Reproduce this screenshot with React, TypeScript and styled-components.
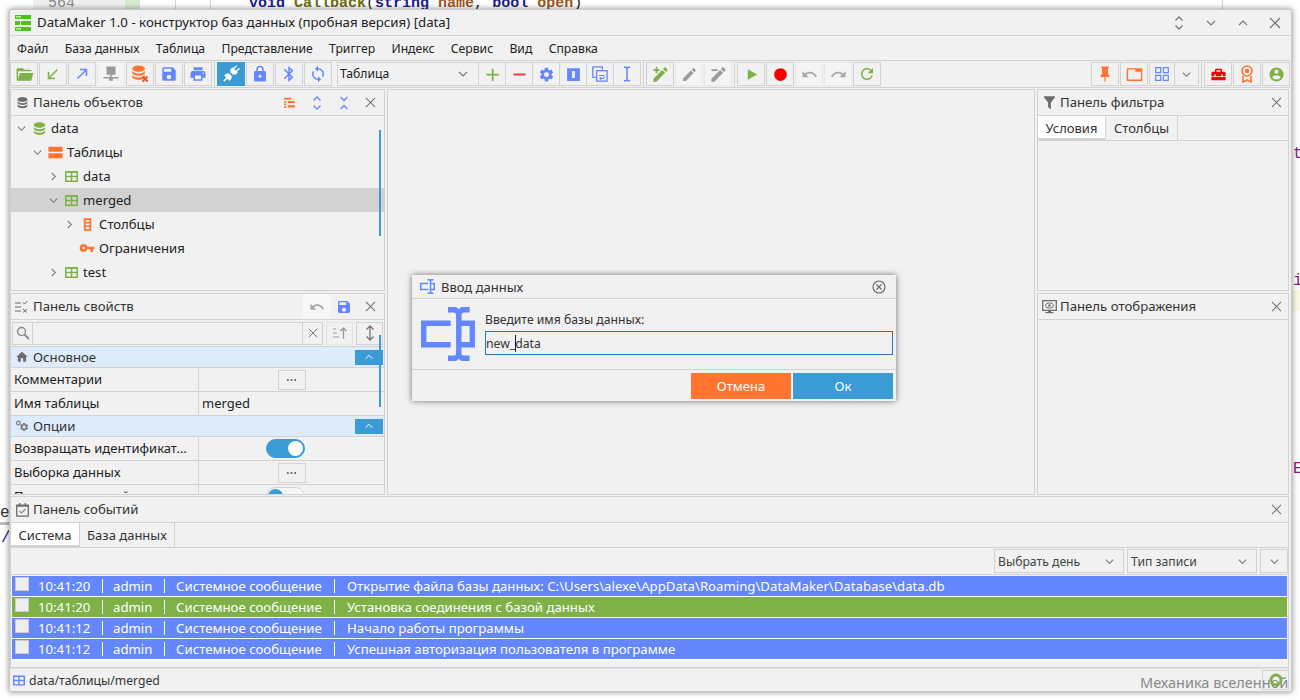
import React, { FC, ReactNode } from 'react';
import styled, { createGlobalStyle } from 'styled-components';
import { MdSettings } from 'react-icons/md';

const BLUE = '#6486ff';
const ORANGE = '#ff7530';
const GREEN = '#7eb246';
const ACCENT = '#3a9bd5';

const PATHS: Record<string, string> = {
  folder: 'M19,20H4C2.89,20 2,19.1 2,18V6C2,4.89 2.89,4 4,4H10L12,6H19A2,2 0 0,1 21,8H21L4,8V18L6.14,10H23.21L20.93,18.5C20.7,19.37 19.92,20 19,20Z',
  save: 'M15,9H5V5H15M12,19A3,3 0 0,1 9,16A3,3 0 0,1 12,13A3,3 0 0,1 15,16A3,3 0 0,1 12,19M17,3H5C3.89,3 3,3.9 3,5V19A2,2 0 0,0 5,21H19A2,2 0 0,0 21,19V7L17,3Z',
  printer: 'M18,3H6V7H18M19,12A1,1 0 0,1 18,11A1,1 0 0,1 19,10A1,1 0 0,1 20,11A1,1 0 0,1 19,12M16,19H8V14H16M19,8H5A3,3 0 0,0 2,11V17H6V21H18V17H22V11A3,3 0 0,0 19,8Z',
  lock: 'M12,17A2,2 0 0,0 14,15C14,13.89 13.1,13 12,13A2,2 0 0,0 10,15A2,2 0 0,0 12,17M18,8A2,2 0 0,1 20,10V20A2,2 0 0,1 18,22H6A2,2 0 0,1 4,20V10C4,8.89 4.9,8 6,8H7V6A5,5 0 0,1 12,1A5,5 0 0,1 17,6V8H18M12,3A3,3 0 0,0 9,6V8H15V6A3,3 0 0,0 12,3Z',
  bluetooth: 'M14.88,16.29L13,18.17V14.41M13,5.83L14.88,7.71L13,9.58M17.71,7.71L12,2H11V9.58L6.41,5L5,6.41L10.59,12L5,17.58L6.41,19L11,14.41V22H12L17.71,16.29L13.41,12L17.71,7.71Z',
  sync: 'M12,18A6,6 0 0,1 6,12C6,11 6.25,10.03 6.7,9.2L5.24,7.74C4.46,8.97 4,10.43 4,12A8,8 0 0,0 12,20V23L16,19L12,15M12,4V1L8,5L12,9V6A6,6 0 0,1 18,12C18,13 17.75,13.97 17.3,14.8L18.76,16.26C19.54,15.03 20,13.57 20,12A8,8 0 0,0 12,4Z',
  database: 'M12,3C7.58,3 4,4.79 4,7C4,9.21 7.58,11 12,11C16.42,11 20,9.21 20,7C20,4.79 16.42,3 12,3M4,9V12C4,14.21 7.58,16 12,16C16.42,16 20,14.21 20,12V9C20,11.21 16.42,13 12,13C7.58,13 4,11.21 4,9M4,14V17C4,19.21 7.58,21 12,21C16.42,21 20,19.21 20,17V14C20,16.21 16.42,18 12,18C7.58,18 4,16.21 4,14Z',
  home: 'M10,20V14H14V20H19V12H22L12,3L2,12H5V20H10Z',
  pin: 'M16,12V4H17V2H7V4H8V12L6,14V16H11.2V22H12.8V16H18V14L16,12Z',
  account: 'M12,19.2C9.5,19.2 7.29,17.92 6,16C6.03,14 10,12.9 12,12.9C14,12.9 17.97,14 18,16C16.71,17.92 14.5,19.2 12,19.2M12,5A3,3 0 0,1 15,8A3,3 0 0,1 12,11A3,3 0 0,1 9,8A3,3 0 0,1 12,5M12,2A10,10 0 0,0 2,12A10,10 0 0,0 12,22A10,10 0 0,0 22,12C22,6.47 17.5,2 12,2Z',
  key: 'M7,14A2,2 0 0,1 5,12A2,2 0 0,1 7,10A2,2 0 0,1 9,12A2,2 0 0,1 7,14M12.65,10C11.83,7.67 9.61,6 7,6A6,6 0 0,0 1,12A6,6 0 0,0 7,18C9.61,18 11.83,16.33 12.65,14H17V18H21V14H23V10H12.65Z',
  filter: 'M14,12V19.88C14.04,20.18 13.94,20.5 13.71,20.71C13.32,21.1 12.69,21.1 12.3,20.71L10.29,18.7C10.06,18.47 9.96,18.16 10,17.87V12H9.97L4.21,4.62C3.87,4.19 3.95,3.56 4.38,3.22C4.57,3.08 4.78,3 5,3V3H19V3C19.22,3 19.43,3.08 19.62,3.22C20.05,3.56 20.13,4.19 19.79,4.62L14.03,12H14Z',
  undo: 'M12.5,8C9.85,8 7.45,9 5.6,10.6L2,7V16H11L7.38,12.38C8.77,11.22 10.54,10.5 12.5,10.5C16.04,10.5 19.05,12.81 20.1,16L22.47,15.22C21.08,11.03 17.15,8 12.5,8Z',
  redo: 'M18.4,10.6C16.55,9 14.15,8 11.5,8C6.85,8 2.92,11.03 1.53,15.22L3.9,16C4.95,12.81 7.96,10.5 11.5,10.5C13.45,10.5 15.23,11.22 16.62,12.38L13,16H22V7L18.4,10.6Z',
  refresh: 'M17.65 6.35C16.2 4.9 14.21 4 12 4c-4.42 0-7.99 3.58-7.99 8s3.57 8 7.99 8c3.73 0 6.84-2.55 7.73-6h-2.08c-.82 2.33-3.04 4-5.65 4-3.31 0-6-2.69-6-6s2.69-6 6-6c1.66 0 3.14.69 4.22 1.78L13 11h7V4l-2.35 2.35z',
  pencil: 'M20.71,7.04C21.1,6.65 21.1,6 20.71,5.63L18.37,3.29C18,2.9 17.35,2.9 16.96,3.29L15.12,5.12L18.87,8.87M3,17.25V21H6.75L17.81,9.93L14.06,6.18L3,17.25Z',
  toolbox: 'M18 16H16V15H8V16H6V15H2V20H22V15H18V16M20 8H17V6C17 4.9 16.1 4 15 4H9C7.9 4 7 4.9 7 6V8H4C2.9 8 2 8.9 2 10V14H6V12H8V14H16V12H18V14H22V10C22 8.9 21.1 8 20 8M15 8H9V6H15V8Z',
  ibeam: 'M13,19A1,1 0 0,0 14,20H16V22H13.5C12.95,22 12,21.55 12,21C12,21.55 11.05,22 10.5,22H8V20H10A1,1 0 0,0 11,19V5A1,1 0 0,0 10,4H8V2H10.5C11.05,2 12,2.45 12,3C12,2.45 12.95,2 13.5,2H16V4H14A1,1 0 0,0 13,5V19Z',
  textbox: 'M17,7H22V17H17V19A1,1 0 0,0 18,20H20V22H17.5C16.95,22 16,21.55 16,21C16,21.55 15.05,22 14.5,22H12V20H14A1,1 0 0,0 15,19V5A1,1 0 0,0 14,4H12V2H14.5C15.05,2 16,2.45 16,3C16,2.45 16.95,2 17.5,2H20V4H18A1,1 0 0,0 17,5V7M2,7H13V9H4V15H13V17H2V7M20,15V9H17V15H20Z',
  server: 'M6 2h12v11h-5v3h9v2H14.5v3h-5v-3H2v-2h9v-3H6z',
  infobox: 'M3 3h18v18H3z M10 7v10h4V7z',
  plus: 'M11 4h2.5v7H21v2.5h-7.5V21H11v-7.5H3.5V11H11z',
  minus: 'M3.5 10.5h17v3h-17z',
  tables: 'M2 4h20v7H2z M2 13h20v7H2z',
  cols: 'M6 2h12v20H6z M9 5v3h6V5z M9 10.5v3h6v-3z M9 16v3h6v-3z',
  play: 'M6 3.5L21 12 6 20.5z',
  circle: 'M12 3a9 9 0 1 0 0 18 9 9 0 0 0 0-18z',
  toolwin: 'M1 3h22v18H1z M3 8v11h18V8z M3 5v3h10V5z',
  tree: 'M2 3h13v4H2z M2 9h4v3H2z M2 14h4v3H2z M2 19h4v3H2z M9 9h13v4H9z M9 17h13v4H9z',
};

const Glyph: FC<{ name: string; size?: number; color: string }> = ({ name, size = 16, color }) => (
  <IconSvg viewBox='0 0 24 24' width={size} height={size} $color={color}>
    <path fillRule='evenodd' d={PATHS[name]} />
  </IconSvg>
);

const Chevron: FC<{ dir?: 'up' | 'down' | 'right'; size?: number; color?: string }> = ({ dir = 'down', size = 12, color = '#777' }) => {
  const pts = dir === 'down' ? '4,8 12,16 20,8' : dir === 'up' ? '4,16 12,8 20,16' : '8,4 16,12 8,20';
  return (
    <svg viewBox='0 0 24 24' width={size} height={size}>
      <polyline points={pts} fill='none' stroke={color} strokeWidth='2.4' />
    </svg>
  );
};

const Cross: FC<{ size?: number; color?: string }> = ({ size = 11, color = '#6f6f6f' }) => (
  <svg viewBox='0 0 12 12' width={size} height={size}>
    <path d='M1 1l10 10M11 1L1 11' stroke={color} strokeWidth='1.1' fill='none' />
  </svg>
);

const DoubleChevron: FC<{ inward?: boolean; color: string; size?: number }> = ({ inward, color, size = 14 }) => (
  <svg viewBox='0 0 14 14' width={size} height={size}>
    <polyline points={inward ? '3.5,1 7,4.5 10.5,1' : '3.5,4.5 7,1 10.5,4.5'} fill='none' stroke={color} strokeWidth='1.3' />
    <polyline points={inward ? '3.5,13 7,9.5 10.5,13' : '3.5,9.5 7,13 10.5,9.5'} fill='none' stroke={color} strokeWidth='1.3' />
  </svg>
);

const TableIcon: FC<{ color?: string; w?: number; h?: number }> = ({ color = GREEN, w = 13, h = 11 }) => (
  <svg viewBox='0 0 13 11' width={w} height={h}>
    <path d='M.75.75h11.5v9.5H.75zM6.5.75v9.5M.75 5.5h11.5' fill='none' stroke={color} strokeWidth='1.5' />
    <path d='M.75.75h11.5v1H.75z' fill={color} />
  </svg>
);

const Logo = () => (
  <svg viewBox='0 0 16 16' width={16} height={16}>
    <path d='M0 0h16v4H0z' fill='#4cc31a' />
    <path d='M0 6h5v4H0z' fill='#4cc31a' />
    <path d='M6 6h10v4H6z' fill='#4cc31a' />
    <path d='M0 12h16v4H0z' fill='#4cc31a' />
    <path d='M1 1.2h5v1.4H1zM1 13.2h5v1.4H1z' fill='#d8f5c8' />
  </svg>
);

const ArrowBL: FC<{ flip?: boolean; color: string }> = ({ flip, color }) => (
  <FlipSvg viewBox='0 0 16 16' width={16} height={16} $flip={flip}>
    <path d='M12.5 3.5L4 12M3.5 6V12.500H10' fill='none' stroke={color} strokeWidth='1.5' />
  </FlipSvg>
);

const DbRemove = () => (
  <svg viewBox='0 0 20 20' width={20} height={20}>
    <path transform='translate(-1 -1) scale(.8)' d={PATHS.database} fill={ORANGE} />
    <path d='M12.5 12.5l5 5M17.5 12.5l-5 5' stroke='#e8541c' strokeWidth='1.8' />
  </svg>
);

const Plug = () => (
  <svg viewBox='0 0 24 24' width={20} height={20}>
    <g transform='rotate(45 12 12)' fill='#fff'>
      <path d='M9 0h1.6v5H9zM13.4 0H15v5h-1.6zM7.5 5h9v3.5l-2.5 2.5h-4L7.5 8.5z' />
      <path d='M10 13h4l2.5 2.5V19h-3.5v5h-2v-5H7.500v-3.500z' />
    </g>
  </svg>
);

const CopySync = () => (
  <svg viewBox='0 0 16 16' width={16} height={16}>
    <path d='M.8.8h9.5v3M.8.8v10.500h3' fill='none' stroke={BLUE} strokeWidth='1.3' />
    <path d='M4.600 4.600h10.500v10.600H4.600z' fill='none' stroke={BLUE} strokeWidth='1.300' />
    <path d='M7 9.500h5v3H8M9.500 11l-2 1.500 2 1.500' fill='none' stroke={BLUE} strokeWidth='1' />
  </svg>
);

const PencilMark: FC<{ color: string; plus?: boolean }> = ({ color, plus }) => (
  <svg viewBox='0 0 24 24' width={19} height={19}>
    <path d={PATHS.pencil} fill={color} />
    <path d={plus ? 'M3 6.500h8M7 2.500v8' : 'M3 6.500h8'} stroke={color} strokeWidth='2.200' />
  </svg>
);

const GridIcon = () => (
  <svg viewBox='0 0 14 14' width={14} height={14}>
    <path d='M.7.7h5v5h-5zM8.300.7h5v5h-5zM.7 8.300h5v5h-5zM8.300 8.300h5v5h-5z' fill='none' stroke={BLUE} strokeWidth='1.200' />
  </svg>
);

const Ribbon = () => (
  <svg viewBox='0 0 16 18' width={16} height={18}>
    <circle cx='8' cy='6' r='5' fill='none' stroke={ORANGE} strokeWidth='1.600' />
    <circle cx='8' cy='6' r='2.200' fill={ORANGE} />
    <path d='M4 11v6l4-2 4 2v-6' fill='none' stroke={ORANGE} strokeWidth='1.600' />
  </svg>
);

const PropsIcon = () => (
  <svg viewBox='0 0 14 12' width={14} height={12}>
    <path d='M0 2h6M0 6h6M0 10h6M8 1.500l1.500 1.500 3-3M8 8l4 3.500M12 8l-4 3.500' fill='none' stroke='#666' strokeWidth='1' />
  </svg>
);

const MonitorEye = () => (
  <svg viewBox='0 0 15 14' width={15} height={14}>
    <path d='M.7.7h13.600v9.600H.7z' fill='none' stroke='#6d6d6d' strokeWidth='1.300' />
    <path d='M6 10.500h3v1.500h2.500v1.300h-8V12H6z' fill='#6d6d6d' />
    <ellipse cx='7.500' cy='5.500' rx='4' ry='2.600' fill='none' stroke='#6d6d6d' />
    <circle cx='7.500' cy='5.500' r='1.300' fill='#6d6d6d' />
  </svg>
);

const CalendarCheck = () => (
  <svg viewBox='0 0 13 14' width={13} height={14}>
    <path d='M.7 2.200h11.600v11H.7z' fill='none' stroke='#6d6d6d' strokeWidth='1.300' />
    <path d='M.7 2h11.600v1.800H.7zM3 0h1.400v2H3zM8.600 0H10v2H8.600z' fill='#6d6d6d' />
    <path d='M3.500 8l2 2 4-4' fill='none' stroke='#8a8a8a' strokeWidth='1.200' />
  </svg>
);

const Dots = () => (
  <svg viewBox='0 0 12 4' width={11} height={4}>
    <circle cx='2' cy='2' r='1.200' fill='#666' />
    <circle cx='6' cy='2' r='1.200' fill='#666' />
    <circle cx='10' cy='2' r='1.200' fill='#666' />
  </svg>
);

const SearchGlyph = () => (
  <svg viewBox='0 0 14 14' width={14} height={14}>
    <circle cx='5.500' cy='5.500' r='4' fill='none' stroke='#888' strokeWidth='1.300' />
    <path d='M8.500 8.500l4.500 4.500' stroke='#888' strokeWidth='1.800' />
  </svg>
);

const SortGlyph = () => (
  <svg viewBox='0 0 16 14' width={16} height={14}>
    <path d='M1 3h3M1 7h4M1 11h6' stroke='#999' strokeWidth='1.200' />
    <path d='M11.500 13V2M8.500 5l3-3 3 3' fill='none' stroke='#999' strokeWidth='1.300' />
  </svg>
);

const UpDownGlyph = () => (
  <svg viewBox='0 0 12 16' width={12} height={16}>
    <path d='M6 1v14M2.500 4.500L6 1l3.500 3.500M2.500 11.500L6 15l3.500-3.500' fill='none' stroke='#777' strokeWidth='1.300' />
  </svg>
);

const GearsGlyph = () => (
  <GearsBox>
    <MdSettings size={8} color='#8a8a8a' />
    <MdSettings size={12} color='#7a7a7a' />
  </GearsBox>
);

const CloseCircle = () => (
  <svg viewBox='0 0 14 14' width={14} height={14}>
    <circle cx='7' cy='7' r='6' fill='none' stroke='#666' strokeWidth='1.100' />
    <path d='M4.500 4.500l5 5M9.500 4.500l-5 5' stroke='#666' strokeWidth='1.100' />
  </svg>
);

const ToolButtons: FC<{ items: [ReactNode, boolean?, boolean?][] }> = ({ items }) => (
  <>
    {items.map(([icon, muted, active], i) => (
      <ToolBtn key={i} $muted={muted} $active={active}>
        {icon}
      </ToolBtn>
    ))}
  </>
);

const MENU = ['Файл', 'База данных', 'Таблица', 'Представление', 'Триггер', 'Индекс', 'Сервис', 'Вид', 'Справка'];

const TREE: { depth: number; arrow?: 'down' | 'right'; icon: ReactNode; label: string; selected?: boolean }[] = [
  { depth: 0, arrow: 'down', icon: <Glyph name='database' size={17} color={GREEN} />, label: 'data' },
  { depth: 1, arrow: 'down', icon: <Glyph name='tables' size={17} color={ORANGE} />, label: 'Таблицы' },
  { depth: 2, arrow: 'right', icon: <TableIcon />, label: 'data' },
  { depth: 2, arrow: 'down', icon: <TableIcon />, label: 'merged', selected: true },
  { depth: 3, arrow: 'right', icon: <Glyph name='cols' size={15} color={ORANGE} />, label: 'Столбцы' },
  { depth: 3, icon: <Glyph name='key' size={16} color={ORANGE} />, label: 'Ограничения' },
  { depth: 2, arrow: 'right', icon: <TableIcon />, label: 'test' },
];

const EVENTS = [
  { time: '10:41:20', text: 'Открытие файла базы данных: C:\\Users\\alexe\\AppData\\Roaming\\DataMaker\\Database\\data.db', color: BLUE },
  { time: '10:41:20', text: 'Установка соединения с базой данных', color: GREEN },
  { time: '10:41:12', text: 'Начало работы программы', color: BLUE },
  { time: '10:41:12', text: 'Успешная авторизация пользователя в программе', color: BLUE },
];

const App: FC = () => (
  <Screen>
    <GlobalStyle />
    <Backdrop>
      <Gutter>564</Gutter>
      <GutterMark />
      <EdgeLine $x={175} />
      <EdgeLine $x={210} />
      <EdgeLine $x={1222} />
      <CodeLine>
        <CodeWord $color='#1c1c8c'>void</CodeWord> <CodeWord $color='#6c6c10'>Callback</CodeWord>(<CodeWord $color='#1c1c8c'>string</CodeWord> <CodeWord $color='#a0561c'>name</CodeWord>, <CodeWord $color='#1c1c8c'>bool</CodeWord> <CodeWord $color='#a0561c'>open</CodeWord>)
      </CodeLine>
      <EdgeChar $x={1293} $y={144} $color='#8a1a8a'>t</EdgeChar>
      <EdgeChar $x={1293} $y={271} $color='#8a1a8a'>i</EdgeChar>
      <EdgeChar $x={1293} $y={459} $color='#8a1a8a'>E</EdgeChar>
      <EdgeChar $x={0} $y={503} $color='#333'>e</EdgeChar>
      <EdgeChar $x={1} $y={528} $color='#1c1c8c'>/</EdgeChar>
      <EdgeStrip />
      <YellowStrip />
    </Backdrop>

    <Window>
      <TitleBar>
        <Logo />
        <TitleText>DataMaker 1.0 - конструктор баз данных (пробная версия) [data]</TitleText>
        <WinControls>
          <WinBtn><DoubleChevron color='#777' size={14} /></WinBtn>
          <WinBtn><Chevron size={12} /></WinBtn>
          <WinBtn><Chevron dir='up' size={12} /></WinBtn>
          <WinBtn><Cross size={12} /></WinBtn>
        </WinControls>
      </TitleBar>

      <MenuBar>
        {MENU.map((m) => (
          <MenuItem key={m}>{m}</MenuItem>
        ))}
      </MenuBar>

      <Toolbar>
        <ToolButtons
          items={[
            [<Glyph name='folder' size={19} color={GREEN} />],
            [<ArrowBL color={GREEN} />],
            [<ArrowBL color={BLUE} flip />],
            [<Glyph name='server' size={18} color='#999' />, true],
            [<DbRemove />],
            [<Glyph name='save' size={18} color={BLUE} />],
            [<Glyph name='printer' size={18} color={BLUE} />],
          ]}
        />
        <ToolSep />
        <ToolButtons
          items={[
            [<Plug />, false, true],
            [<Glyph name='lock' size={18} color={BLUE} />],
            [<Glyph name='bluetooth' size={18} color={BLUE} />],
            [<Glyph name='sync' size={18} color={BLUE} />],
          ]}
        />
        <ComboBox>
          <span>Таблица</span>
          <Chevron size={12} />
        </ComboBox>
        <JoinedBtn><Glyph name='plus' size={17} color={GREEN} /></JoinedBtn>
        <JoinedBtn><Glyph name='minus' size={17} color='#f0454f' /></JoinedBtn>
        <JoinedBtn><MdSettings size={17} color={BLUE} /></JoinedBtn>
        <JoinedBtn><Glyph name='infobox' size={17} color={BLUE} /></JoinedBtn>
        <JoinedBtn><CopySync /></JoinedBtn>
        <JoinedBtn><Glyph name='ibeam' size={18} color={BLUE} /></JoinedBtn>
        <ToolSep />
        <ToolButtons
          items={[
            [<PencilMark color={GREEN} plus />],
            [<Glyph name='pencil' size={17} color='#999' />, true],
            [<PencilMark color='#999' />, true],
          ]}
        />
        <ToolSep />
        <ToolButtons
          items={[
            [<Glyph name='play' size={15} color={GREEN} />],
            [<Glyph name='circle' size={17} color='#f50000' />],
            [<Glyph name='undo' size={17} color='#a8a8a8' />, true],
            [<Glyph name='redo' size={17} color='#a8a8a8' />, true],
            [<Glyph name='refresh' size={18} color={GREEN} />],
          ]}
        />
        <Spacer />
        <ToolButtons
          items={[
            [<Glyph name='pin' size={18} color={ORANGE} />],
            [<Glyph name='toolwin' size={17} color={ORANGE} />],
          ]}
        />
        <ToolGroupJoined>
          <GridBtn><GridIcon /></GridBtn>
          <ArrowBtn><Chevron size={11} /></ArrowBtn>
        </ToolGroupJoined>
        <ToolSep />
        <ToolButtons
          items={[
            [<Glyph name='toolbox' size={17} color='#f20000' />],
            [<Ribbon />],
            [<Glyph name='account' size={17} color={GREEN} />],
          ]}
        />
      </Toolbar>

      <Workspace>
        <LeftColumn>
          <ObjectsPanel>
            <PanelHeader>
              <HeaderIcon><Glyph name='database' size={15} color='#6d6d6d' /></HeaderIcon>
              <PanelTitle>Панель объектов</PanelTitle>
              <HeaderBtn><Glyph name='tree' size={13} color={ORANGE} /></HeaderBtn>
              <HeaderBtn><DoubleChevron color={BLUE} /></HeaderBtn>
              <HeaderBtn><DoubleChevron color={BLUE} inward /></HeaderBtn>
              <HeaderBtn><Cross /></HeaderBtn>
            </PanelHeader>
            <Tree>
              {TREE.map((row, i) => (
                <TreeRow key={i} $depth={row.depth} $selected={row.selected}>
                  <TreeArrow>{row.arrow && <Chevron dir={row.arrow} size={11} />}</TreeArrow>
                  <TreeIcon>{row.icon}</TreeIcon>
                  <span>{row.label}</span>
                </TreeRow>
              ))}
              <ScrollThumb $top={14} $height={106} />
            </Tree>
          </ObjectsPanel>

          <PropsPanel>
            <PanelHeader>
              <HeaderIcon><PropsIcon /></HeaderIcon>
              <PanelTitle>Панель свойств</PanelTitle>
              <UndoBtn><Glyph name='undo' size={16} color='#a8a8a8' /></UndoBtn>
              <HeaderBtn><Glyph name='save' size={16} color={BLUE} /></HeaderBtn>
              <HeaderBtn><Cross /></HeaderBtn>
            </PanelHeader>
            <SearchRow>
              <SearchBox>
                <SearchIconCell><SearchGlyph /></SearchIconCell>
                <SearchField />
                <SearchClear><Cross size={10} /></SearchClear>
              </SearchBox>
              <SearchBtn $muted><SortGlyph /></SearchBtn>
              <SearchBtn><UpDownGlyph /></SearchBtn>
            </SearchRow>
            <PropsBody>
              <SectionRow>
                <Glyph name='home' size={14} color='#6d6d6d' />
                <span>Основное</span>
                <CollapseBtn><Chevron dir='up' size={10} color='#fff' /></CollapseBtn>
              </SectionRow>
              <PropRow>
                <PropName>Комментарии</PropName>
                <PropValue $center><EllipsisBtn><Dots /></EllipsisBtn></PropValue>
              </PropRow>
              <PropRow>
                <PropName>Имя таблицы</PropName>
                <PropValue>merged</PropValue>
              </PropRow>
              <SectionRow>
                <GearsGlyph />
                <span>Опции</span>
                <CollapseBtn><Chevron dir='up' size={10} color='#fff' /></CollapseBtn>
              </SectionRow>
              <PropRow>
                <PropName>Возвращать идентификат...</PropName>
                <PropValue $center><Toggle $on /></PropValue>
              </PropRow>
              <PropRow>
                <PropName>Выборка данных</PropName>
                <PropValue $center><EllipsisBtn><Dots /></EllipsisBtn></PropValue>
              </PropRow>
              <PropRow>
                <PropName>Проверка записей</PropName>
                <PropValue $center><Toggle /></PropValue>
              </PropRow>
              <ScrollThumb $top={-12} $height={72} />
            </PropsBody>
          </PropsPanel>
        </LeftColumn>

        <CenterPane />

        <RightColumn>
          <ObjectsPanel>
            <PanelHeader>
              <HeaderIcon><Glyph name='filter' size={17} color='#6d6d6d' /></HeaderIcon>
              <PanelTitle>Панель фильтра</PanelTitle>
              <EdgeCloseBtn><Cross /></EdgeCloseBtn>
            </PanelHeader>
            <TabStrip>
              <Tab $active $width={68}>Условия</Tab>
              <Tab $width={72}>Столбцы</Tab>
            </TabStrip>
          </ObjectsPanel>
          <PropsPanel>
            <PanelHeader>
              <HeaderIcon><MonitorEye /></HeaderIcon>
              <PanelTitle>Панель отображения</PanelTitle>
              <EdgeCloseBtn><Cross /></EdgeCloseBtn>
            </PanelHeader>
          </PropsPanel>
        </RightColumn>
      </Workspace>

      <EventsPanel>
        <PanelHeader>
          <HeaderIcon><CalendarCheck /></HeaderIcon>
          <PanelTitle>Панель событий</PanelTitle>
          <EdgeCloseBtn><Cross /></EdgeCloseBtn>
        </PanelHeader>
        <TabStrip>
          <Tab $active $width={69}>Система</Tab>
          <Tab $width={95}>База данных</Tab>
        </TabStrip>
        <FilterRow>
          <FilterSelect $width={130}>
            <span>Выбрать день</span>
            <Chevron size={11} />
          </FilterSelect>
          <FilterSelect $width={130}>
            <span>Тип записи</span>
            <Chevron size={11} />
          </FilterSelect>
          <FilterSelect $width={28} $center>
            <Chevron size={11} />
          </FilterSelect>
        </FilterRow>
        <EventList>
          {EVENTS.map((e, i) => (
            <EventRow key={i} $color={e.color}>
              <EventCheck />
              <EventTime>{e.time}</EventTime>
              <EventBar />
              <EventUser>admin</EventUser>
              <EventBar />
              <EventKind>Системное сообщение</EventKind>
              <EventBar />
              <EventText>{e.text}</EventText>
            </EventRow>
          ))}
        </EventList>
      </EventsPanel>

      <StatusBar>
        <TableIcon color={BLUE} w={12} h={11} />
        <span>data/таблицы/merged</span>
      </StatusBar>
    </Window>

    <Dialog>
      <DialogTitle>
        <svg viewBox='2 2 20 20' width={15} height={15}>
          <path d={PATHS.textbox} fill={BLUE} />
        </svg>
        <DialogCaption>Ввод данных</DialogCaption>
        <CloseCircle />
      </DialogTitle>
      <DialogBody>
        <svg viewBox='2 2 20 20' width={54} height={54}>
          <path d={PATHS.textbox} fill={BLUE} />
        </svg>
        <DialogForm>
          <DialogLabel>Введите имя базы данных:</DialogLabel>
          <DialogInput>
            new_<Caret />data
          </DialogInput>
        </DialogForm>
      </DialogBody>
      <DialogFooter>
        <DialogBtn $color={ORANGE}>Отмена</DialogBtn>
        <DialogBtn $color={ACCENT}>Ок</DialogBtn>
      </DialogFooter>
    </Dialog>

    <Watermark>Механика вселенной</Watermark>
    <TrayBox>
      <svg viewBox='0 0 14 14' width={14} height={14}>
        <circle cx='7' cy='7' r='5' fill='none' stroke={GREEN} strokeWidth='3' />
      </svg>
    </TrayBox>
  </Screen>
);

export default App;

const GlobalStyle = createGlobalStyle`
  html, body {
    margin: 0;
    padding: 0;
    background: #fff;
  }
  * {
    box-sizing: border-box;
  }
`;

const IconSvg = styled.svg<{ $color: string }>`
  display: block;
  flex: none;
  fill: ${(p) => p.$color};
`;

const FlipSvg = styled.svg<{ $flip?: boolean }>`
  transform: ${(p) => (p.$flip ? 'rotate(180deg)' : 'none')};
`;

const Screen = styled.div`
  position: relative;
  width: 1300px;
  height: 700px;
  overflow: hidden;
  padding: 9px 8px 8px 9px;
  font-family: 'Noto Sans', 'Open Sans', sans-serif;
  font-size: 12.2px;
  color: #222;
`;

const Backdrop = styled.div`
  position: absolute;
  inset: 0;
  overflow: hidden;
`;

const Gutter = styled.div`
  position: absolute;
  left: 33px;
  top: -6px;
  width: 92px;
  height: 18px;
  padding-left: 15px;
  background: #f0f0f0;
  font: 15px/20px 'Liberation Mono', monospace;
  color: #888;
`;

const GutterMark = styled.div`
  position: absolute;
  left: 125px;
  top: 0;
  width: 15px;
  height: 9px;
  background: #d8ecd0;
`;

const EdgeLine = styled.div<{ $x: number }>`
  position: absolute;
  left: ${(p) => p.$x}px;
  top: 0;
  width: 1px;
  height: 9px;
  background: #d8d8d8;
`;

const CodeLine = styled.div`
  position: absolute;
  left: 249px;
  top: -6px;
  font: 15px/20px 'Liberation Mono', monospace;
  white-space: pre;
  color: #222;
`;

const CodeWord = styled.b<{ $color: string }>`
  color: ${(p) => p.$color};
`;

const EdgeChar = styled.div<{ $x: number; $y: number; $color: string }>`
  position: absolute;
  left: ${(p) => p.$x}px;
  top: ${(p) => p.$y}px;
  font: 16px/20px 'Liberation Mono', monospace;
  color: ${(p) => p.$color};
`;

const EdgeStrip = styled.div`
  position: absolute;
  left: 0;
  top: 522px;
  width: 9px;
  height: 3px;
  background: #b8bcc4;
`;

const YellowStrip = styled.div`
  position: absolute;
  right: 0;
  top: 290px;
  width: 8px;
  height: 21px;
  background: #fbfbe8;
`;

const Window = styled.div`
  position: relative;
  display: flex;
  flex-direction: column;
  width: 1283px;
  height: 683px;
  background: #f1f1f1;
  border: 1px solid #c9c9c9;
  box-shadow: 0 0 6px rgba(0, 0, 0, 0.45);
`;

const TitleBar = styled.div`
  display: flex;
  align-items: center;
  height: 26px;
  padding-left: 5px;
  border-bottom: 1px solid #d2d2d2;
  flex: none;
`;

const TitleText = styled.div`
  margin: -2px 0 0 6px;
  font-size: 13.25px;
  color: #222;
`;

const WinControls = styled.div`
  display: flex;
  margin-left: auto;
`;

const WinBtn = styled.div`
  display: flex;
  align-items: center;
  justify-content: center;
  width: 32px;
  height: 25px;
`;

const MenuBar = styled.div`
  display: flex;
  align-items: center;
  gap: 16.3px;
  height: 25px;
  padding-left: 7px;
  border-bottom: 1px solid #d2d2d2;
  flex: none;
`;

const MenuItem = styled.div`
  color: #222;
`;

const Toolbar = styled.div`
  display: flex;
  align-items: center;
  gap: 1px;
  height: 27px;
  padding-right: 1px;
  border-bottom: 1px solid #d2d2d2;
  flex: none;
`;

const ToolBtn = styled.div<{ $muted?: boolean; $active?: boolean }>`
  display: flex;
  align-items: center;
  justify-content: center;
  width: 28px;
  height: 24px;
  border: 1px solid ${(p) => (p.$active ? ACCENT : p.$muted ? '#e8e8e8' : '#d2d2d2')};
  background: ${(p) => (p.$active ? ACCENT : p.$muted ? '#f4f4f4' : 'transparent')};
  flex: none;
`;

const ToolSep = styled.div`
  width: 1px;
  height: 26px;
  margin: 0 1px;
  background: #d2d2d2;
  flex: none;
`;

const ComboBox = styled.div`
  display: flex;
  align-items: center;
  justify-content: space-between;
  width: 142px;
  height: 24px;
  margin-left: 4px;
  padding: 0 9px 1px 2px;
  border: 1px solid #d2d2d2;
  flex: none;
`;

const JoinedBtn = styled(ToolBtn)`
  margin-left: -2px;
`;

const Spacer = styled.div`
  flex: 1;
`;

const ToolGroupJoined = styled.div`
  display: flex;
  flex: none;
`;

const GridBtn = styled(ToolBtn)`
  width: 26px;
`;

const ArrowBtn = styled(ToolBtn)`
  width: 25px;
  margin-left: -1px;
`;

const Workspace = styled.div`
  display: flex;
  gap: 2px;
  padding: 1px 2px 0 0;
  height: 407px;
  flex: none;
`;

const LeftColumn = styled.div`
  display: flex;
  flex-direction: column;
  gap: 2px;
  width: 375px;
  flex: none;
`;

const RightColumn = styled(LeftColumn)`
  width: 252px;
`;

const CenterPane = styled.div`
  flex: 1;
  border: 1px solid #d2d2d2;
`;

const PanelBase = styled.div`
  position: relative;
  display: flex;
  flex-direction: column;
  border: 1px solid #d2d2d2;
  overflow: hidden;
`;

const ObjectsPanel = styled(PanelBase)`
  height: 202px;
  flex: none;
`;

const PropsPanel = styled(PanelBase)`
  flex: 1;
  min-height: 0;
`;

const PanelHeader = styled.div`
  display: flex;
  align-items: center;
  height: 26px;
  border-bottom: 1px solid #d2d2d2;
  flex: none;
`;

const HeaderIcon = styled.div`
  display: flex;
  align-items: center;
  justify-content: center;
  width: 22px;
  height: 100%;
  flex: none;
`;

const PanelTitle = styled.div`
  flex: 1;
  margin-top: -2px;
  font-size: 13.2px;
  color: #333;
`;

const HeaderBtn = styled.div`
  display: flex;
  align-items: center;
  justify-content: center;
  width: 27px;
  height: 25px;
  flex: none;
`;

const EdgeCloseBtn = styled(HeaderBtn)`
  width: 24px;
`;

const UndoBtn = styled(HeaderBtn)`
  background: #f8f8f8;
`;

const Tree = styled.div`
  position: relative;
  flex: 1;
`;

const TreeRow = styled.div<{ $depth: number; $selected?: boolean }>`
  display: flex;
  align-items: center;
  height: 24px;
  padding-left: ${(p) => 4 + p.$depth * 16}px;
  background: ${(p) => (p.$selected ? '#d2d2d2' : 'transparent')};
  font-size: 13.1px;
`;

const TreeArrow = styled.div`
  display: flex;
  align-items: center;
  justify-content: center;
  width: 12px;
  flex: none;
`;

const TreeIcon = styled.div`
  display: flex;
  align-items: center;
  justify-content: center;
  width: 18px;
  margin: 0 3px 0 3px;
  flex: none;
`;

const ScrollThumb = styled.div<{ $top: number; $height: number }>`
  position: absolute;
  right: 3px;
  top: ${(p) => p.$top}px;
  width: 2px;
  height: ${(p) => p.$height}px;
  background: ${ACCENT};
`;

const SearchRow = styled.div`
  display: flex;
  align-items: center;
  gap: 3px;
  height: 27px;
  padding: 0 1px;
  border-bottom: 1px solid #d2d2d2;
  flex: none;
`;

const SearchBox = styled.div`
  display: flex;
  flex: 1;
  height: 23px;
  border: 1px solid #d2d2d2;
`;

const SearchIconCell = styled.div`
  display: flex;
  align-items: center;
  justify-content: center;
  width: 20px;
  border-right: 1px solid #d2d2d2;
  flex: none;
`;

const SearchField = styled.div`
  flex: 1;
`;

const SearchClear = styled.div`
  display: flex;
  align-items: center;
  justify-content: center;
  width: 20px;
  border-left: 1px solid #d2d2d2;
  flex: none;
`;

const SearchBtn = styled.div<{ $muted?: boolean }>`
  display: flex;
  align-items: center;
  justify-content: center;
  width: 27px;
  height: 23px;
  border: 1px solid ${(p) => (p.$muted ? '#e4e4e4' : '#d2d2d2')};
  flex: none;
`;

const PropsBody = styled.div`
  position: relative;
  flex: 1;
  min-height: 0;
`;

const SectionRow = styled.div`
  display: flex;
  align-items: center;
  gap: 4px;
  height: 21px;
  padding-left: 4px;
  background: #deebfb;
  border-bottom: 1px solid #d2d2d2;
  font-size: 13.2px;
  color: #333;
`;

const CollapseBtn = styled.div`
  display: flex;
  align-items: center;
  justify-content: center;
  width: 28px;
  height: 15px;
  margin-left: auto;
  margin-right: 1px;
  background: ${ACCENT};
`;

const GearsBox = styled.div`
  display: flex;
  align-items: flex-end;
  width: 14px;
  height: 14px;
  flex: none;

  svg:first-child {
    align-self: flex-start;
    margin-right: -3px;
  }
`;

const PropRow = styled.div`
  display: flex;
  height: 24px;
  font-size: 13px;
  border-bottom: 1px solid #d2d2d2;
`;

const PropName = styled.div`
  display: flex;
  align-items: center;
  width: 188px;
  padding: 0 0 2px 3px;
  white-space: nowrap;
  overflow: hidden;
  border-right: 1px solid #d2d2d2;
  flex: none;
`;

const PropValue = styled.div<{ $center?: boolean }>`
  display: flex;
  align-items: center;
  justify-content: ${(p) => (p.$center ? 'center' : 'flex-start')};
  flex: 1;
  padding: ${(p) => (p.$center ? '0' : '0 0 2px 3px')};
`;

const EllipsisBtn = styled.div`
  display: flex;
  align-items: center;
  justify-content: center;
  width: 28px;
  height: 20px;
  border: 1px solid #d2d2d2;
`;

const Toggle = styled.div<{ $on?: boolean }>`
  position: relative;
  width: 39px;
  height: 19px;
  margin-right: 12px;
  border-radius: 10px;
  border: 1px solid ${(p) => (p.$on ? ACCENT : '#d2d2d2')};
  background: ${(p) => (p.$on ? ACCENT : '#f6f6f6')};

  &::after {
    content: '';
    position: absolute;
    ${(p) => (p.$on ? 'right: 1px;' : 'left: 1px;')}
    top: 1px;
    width: 15px;
    height: 15px;
    border-radius: 50%;
    background: ${(p) => (p.$on ? '#fff' : ACCENT)};
  }
`;

const TabStrip = styled.div`
  display: flex;
  height: 25px;
  border-bottom: 1px solid #d2d2d2;
  flex: none;
`;

const Tab = styled.div<{ $active?: boolean; $width: number }>`
  display: flex;
  align-items: center;
  justify-content: center;
  width: ${(p) => p.$width}px;
  height: ${(p) => (p.$active ? '24px' : '100%')};
  padding-top: ${(p) => (p.$active ? 2 : 0)}px;
  border-right: 1px solid #d2d2d2;
  background: ${(p) => (p.$active ? '#fff' : 'transparent')};
  border-bottom: ${(p) => (p.$active ? '2px solid #d2d2d2' : 'none')};
  color: #333;
  font-size: 13px;
`;

const EventsPanel = styled(PanelBase)`
  height: 172px;
  margin: 1px 2px 0 0;
  flex: none;
`;

const FilterRow = styled.div`
  display: flex;
  justify-content: flex-end;
  align-items: center;
  gap: 3px;
  height: 27px;
  border-bottom: 1px solid #d2d2d2;
  flex: none;
`;

const FilterSelect = styled.div<{ $width: number; $center?: boolean }>`
  display: flex;
  align-items: center;
  justify-content: ${(p) => (p.$center ? 'center' : 'space-between')};
  width: ${(p) => p.$width}px;
  height: 24px;
  padding: ${(p) => (p.$center ? '0' : '0 8px 0 3px')};
  border: 1px solid #d2d2d2;
  color: #444;
`;

const EventList = styled.div`
  flex: 1;
  padding: 1px 0 0 1px;
`;

const EventRow = styled.div<{ $color: string }>`
  display: flex;
  align-items: center;
  height: 21px;
  margin-right: 1px;
  padding-left: 3px;
  background: ${(p) => p.$color};
  border-bottom: 1px solid #fff;
  color: #fff;
  font-size: 13.2px;
  white-space: nowrap;
`;

const EventCheck = styled.div`
  width: 14px;
  height: 14px;
  margin-top: -4px;
  background: #eee;
  border: 1px solid #ccc;
  flex: none;
`;

const EventTime = styled.span`
  width: 54px;
  margin-left: 9px;
  flex: none;
`;

const EventUser = styled.span`
  width: 41px;
  margin-left: 10px;
  flex: none;
`;

const EventKind = styled.span`
  width: 148px;
  margin-left: 11px;
  flex: none;
`;

const EventText = styled.span`
  margin-left: 12px;
`;

const EventBar = styled.div`
  width: 1px;
  height: 14px;
  margin-left: 10px;
  background: #fff;
  flex: none;
`;

const StatusBar = styled.div`
  display: flex;
  align-items: center;
  gap: 4px;
  height: 23px;
  padding-left: 3px;
  border-top: 1px solid #e2e2e2;
  color: #333;
  flex: none;
`;

const Dialog = styled.div`
  position: absolute;
  left: 412px;
  top: 275px;
  display: flex;
  flex-direction: column;
  width: 484px;
  height: 126px;
  background: #f1f1f1;
  box-shadow: 0 0 6px rgba(0, 0, 0, 0.55);
`;

const DialogTitle = styled.div`
  display: flex;
  align-items: center;
  height: 24px;
  padding: 0 10px 0 8px;
  border-bottom: 1px solid #d2d2d2;
  flex: none;
`;

const DialogCaption = styled.div`
  flex: 1;
  margin-left: 6px;
  font-size: 13px;
  color: #333;
`;

const DialogBody = styled.div`
  display: flex;
  align-items: center;
  gap: 10px;
  height: 71px;
  padding: 0 3px 0 9px;
  border-bottom: 1px solid #d2d2d2;
  flex: none;
`;

const DialogForm = styled.div`
  flex: 1;
  align-self: flex-start;
  padding-top: 10px;
`;

const DialogLabel = styled.div`
  height: 21px;
  margin-bottom: 1px;
  line-height: 21px;
  color: #333;
`;

const DialogInput = styled.div`
  display: flex;
  align-items: center;
  height: 24px;
  border: 1px solid #2a78c0;
  color: #333;
`;

const Caret = styled.span`
  width: 1px;
  height: 17px;
  margin: 0 -1px 0 0;
  background: #222;
`;

const DialogFooter = styled.div`
  display: flex;
  justify-content: flex-end;
  align-items: center;
  gap: 2px;
  flex: 1;
  padding-right: 3px;
`;

const DialogBtn = styled.div<{ $color: string }>`
  display: flex;
  align-items: center;
  justify-content: center;
  width: 100px;
  height: 26px;
  background: ${(p) => p.$color};
  color: #fff;
  font-size: 13px;
`;

const Watermark = styled.div`
  position: absolute;
  left: 1140px;
  top: 672px;
  font-size: 14.5px;
  line-height: 20px;
  color: #8a8a8a;
  white-space: nowrap;
`;

const TrayBox = styled.div`
  position: absolute;
  left: 1262px;
  top: 670px;
  display: flex;
  align-items: center;
  justify-content: center;
  width: 27px;
  height: 20px;
  border: 1px solid #d2d2d2;
`;
